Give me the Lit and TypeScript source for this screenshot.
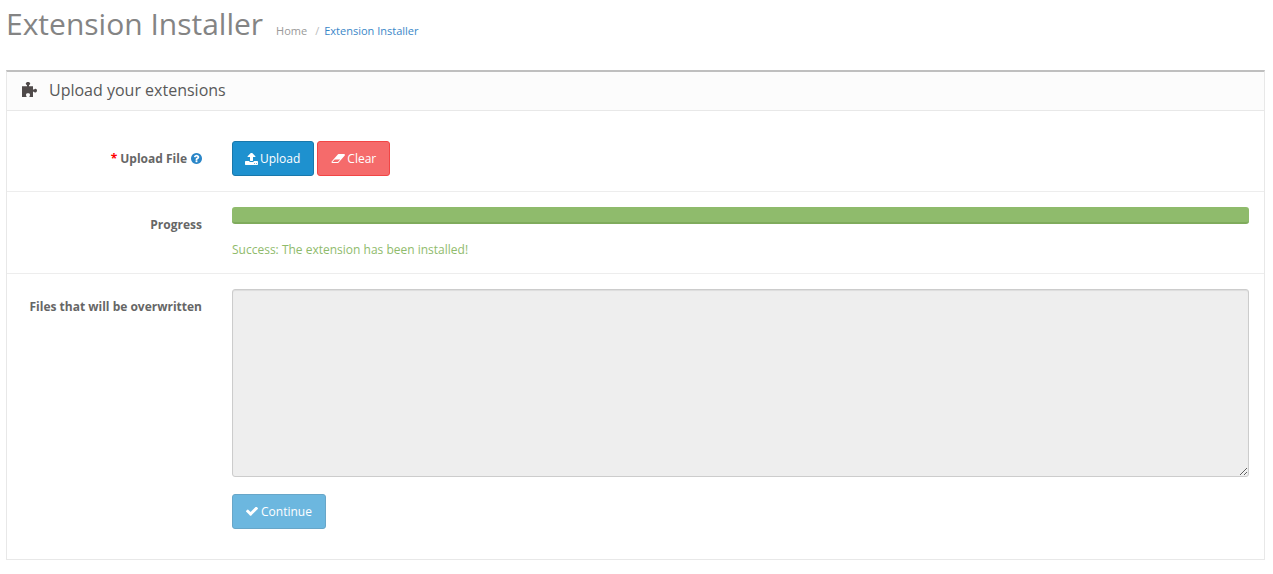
import { LitElement, html, css, svg } from "lit";
import { customElement } from "lit/decorators.js";

const icon = (vb: string, d: string, cls: string, par = "xMidYMid meet") =>
  html`<svg class="ic ${cls}" viewBox="${vb}" preserveAspectRatio="${par}" aria-hidden="true">${svg`<path fill="currentColor" d="${d}"></path>`}</svg>`;

const UPLOAD = "M1344 1472q0-26-19-45t-45-19-45 19-19 45 19 45 45 19 45-19 19-45zm256 0q0-26-19-45t-45-19-45 19-19 45 19 45 45 19 45-19 19-45zm128-224v320q0 40-28 68t-68 28h-1472q-40 0-68-28t-28-68v-320q0-40 28-68t68-28h427q21 56 70.5 92t110.5 36h256q61 0 110.5-36t70.5-92h427q40 0 68 28t28 68zm-325-648q-17 40-59 40h-256v448q0 26-19 45t-45 19h-256q-26 0-45-19t-19-45v-448h-256q-42 0-59-40-17-39 14-69l448-448q18-19 45-19t45 19l448 448q31 30 14 69z";
const ERASER = "M960 1408l336-384h-768l-336 384h768zm1013-1077q15 34 9.5 71.5t-30.5 65.5l-896 1024q-38 44-96 44h-768q-38 0-69.5-20.5t-47.5-54.5q-15-34-9.5-71.5t30.5-65.5l896-1024q38-44 96-44h768q38 0 70 20.5t47 54.5z";
const CHECK = "M1671 566q0 40-28 68l-724 724-136 136q-28 28-68 28t-68-28l-136-136-362-362q-28-28-28-68t28-68l136-136q28-28 68-28t68 28l294 295 656-657q28-28 68-28t68 28l136 136q28 28 28 68z";
const QUESTION = "M1024 1376v-192q0-14-9-23t-23-9h-192q-14 0-23 9t-9 23v192q0 14 9 23t23 9h192q14 0 23-9t9-23zm256-672q0-88-55.5-163t-138.5-116-170-41q-243 0-371 213-15 24 8 42l132 100q7 6 19 6 16 0 25-12 53-68 86-92 34-24 86-24 48 0 85.5 26t37.5 59q0 38-20 61t-68 45q-63 28-115.5 86.5t-52.5 125.5v36q0 14 9 23t23 9h192q14 0 23-9t9-23q0-19 21.5-49.5t54.5-49.5q32-18 49-28.5t46-35 44.5-48 28-60.5 12.5-81zm384 192q0 209-103 385.5t-279.5 279.5-385.5 103-385.5-103-279.5-279.5-103-385.5 103-385.5 279.5-279.5 385.5-103 385.5 103 279.5 279.5 103 385.5z";
const PUZZLE = "M0 4H5V3C4 2.5 3.8 2 3.8 1.5 3.8 .6 4.8 0 6 0S8.2 .6 8.2 1.5C8.2 2 8 2.5 7 3V4H11V7H12C12.5 6.3 13 6.2 13.5 6.2 14.4 6.2 15 7 15 8S14.4 9.8 13.5 9.8C13 9.8 12.5 9.7 12 9H11V14H7.5V13C8 12.5 8 12.3 8 11.8 8 11 7 10.5 6 10.5S4 11 4 11.8C4 12.3 4 12.5 4.5 13V14H0Z";

@customElement("app-root")
export class AppRoot extends LitElement {
  static styles = css`
    :host {
      display: block;
      background: #fff;
      font-family: "Open Sans", sans-serif;
      font-size: 12px;
      line-height: 17px;
      color: #666;
      padding: 0 8px 14px 6px;
      box-sizing: border-box;
      min-height: 574px;
    }
    * { box-sizing: border-box; }
    .ic { display: inline-block; flex: none; }
    .page-header {
      display: flex;
      align-items: baseline;
      height: 70px;
      padding-top: 3px;
    }
    h1 {
      margin: 0;
      font-size: 30px;
      font-weight: 400;
      line-height: 42px;
      color: #848484;
    }
    .crumbs {
      display: flex;
      margin: 0 0 0 13px;
      padding: 0;
      list-style: none;
      font-size: 11px;
      color: #999;
    }
    .crumbs li + li::before { content: "/"; margin: 0 5px 0 8px; color: #bbb; }
    .crumbs .home { color: #999; }
    .crumbs .here { color: #3a87c8; }
    .panel {
      border: 1px solid #e8e8e8;
      border-top: 2px solid #bfbfbf;
    }
    .panel-heading {
      display: flex;
      align-items: center;
      height: 39px;
      padding: 0 0 2px 15px;
      background: #fcfcfc;
      border-bottom: 1px solid #e8e8e8;
      font-size: 16px;
      color: #595959;
    }
    .puzzle { width: 15px; height: 15px; margin: -1px 12px 0 0; color: #4f4a4a; }
    .row {
      display: grid;
      grid-template-columns: 195px 1fr;
      column-gap: 30px;
      padding: 15px 15px 15px 0;
      border-bottom: 1px solid #ededed;
    }
    .row.first { padding-top: 30px; }
    .row.last { border-bottom: 0; padding-bottom: 30px; }
    .label {
      display: flex;
      justify-content: flex-end;
      align-items: center;
      align-self: start;
      padding-top: 9px;
      font-weight: 700;
      color: #666;
    }
    .req { color: #f00; margin-right: 3px; }
    .help { width: 11px; height: 11px; margin-left: 4px; color: #2a86c8; }
    .btns { display: flex; gap: 3px; }
    .btn {
      display: inline-flex;
      align-items: center;
      height: 35px;
      padding: 0 13px;
      border: 1px solid;
      border-radius: 3px;
      color: #fff;
      font: inherit;
    }
    .i-up { width: 13px; height: 12px; margin: 0 2px 0 -1px; }
    .i-er { width: 14px; height: 9px; margin-right: 2px; }
    .i-ck { width: 12px; height: 9px; margin-right: 3px; }
    .blue { background: #1e91cf; border-color: #1978ab; }
    .red { background: #f56b6b; border-color: #f24545; }
    .disabled { opacity: 0.65; }
    .progress {
      height: 17px;
      background: #8fbb6c;
      border-bottom: 2px solid #7fab5c;
      border-radius: 3px;
    }
    .msg { margin-top: 17px; color: #8fbb6c; height: 17px; }
    textarea {
      display: block;
      width: 100%;
      height: 188px;
      padding: 8px 13px;
      background: #eee;
      border: 1px solid #ccc;
      border-radius: 3px;
      box-shadow: inset 0 1px 1px rgba(0, 0, 0, 0.075);
      font: inherit;
    }
    .continue { margin-top: 17px; }
  `;

  render() {
    return html`
      <header class="page-header">
        <h1>Extension Installer</h1>
        <ul class="crumbs">
          <li class="home">Home</li>
          <li class="here">Extension Installer</li>
        </ul>
      </header>
      <section class="panel">
        <div class="panel-heading">
          ${icon("0 0 15 14", PUZZLE, "puzzle", "none")}
          <span>Upload your extensions</span>
        </div>
        <div class="row first">
          <div class="label">
            <span class="req">*</span><span>Upload File</span>
            ${icon("128 128 1536 1536", QUESTION, "help")}
          </div>
          <div class="btns">
            <button class="btn blue">${icon("64 130 1664 1534", UPLOAD, "i-up")}Upload</button>
            <button class="btn red">${icon("0 256 1984 1280", ERASER, "i-er")}Clear</button>
          </div>
        </div>
        <div class="row">
          <div class="label">Progress</div>
          <div>
            <div class="progress"></div>
            <div class="msg">Success: The extension has been installed!</div>
          </div>
        </div>
        <div class="row last">
          <div class="label">Files that will be overwritten</div>
          <div>
            <textarea disabled></textarea>
            <button class="btn blue disabled continue">${icon("121 400 1550 1120", CHECK, "i-ck")}Continue</button>
          </div>
        </div>
      </section>
    `;
  }
}
